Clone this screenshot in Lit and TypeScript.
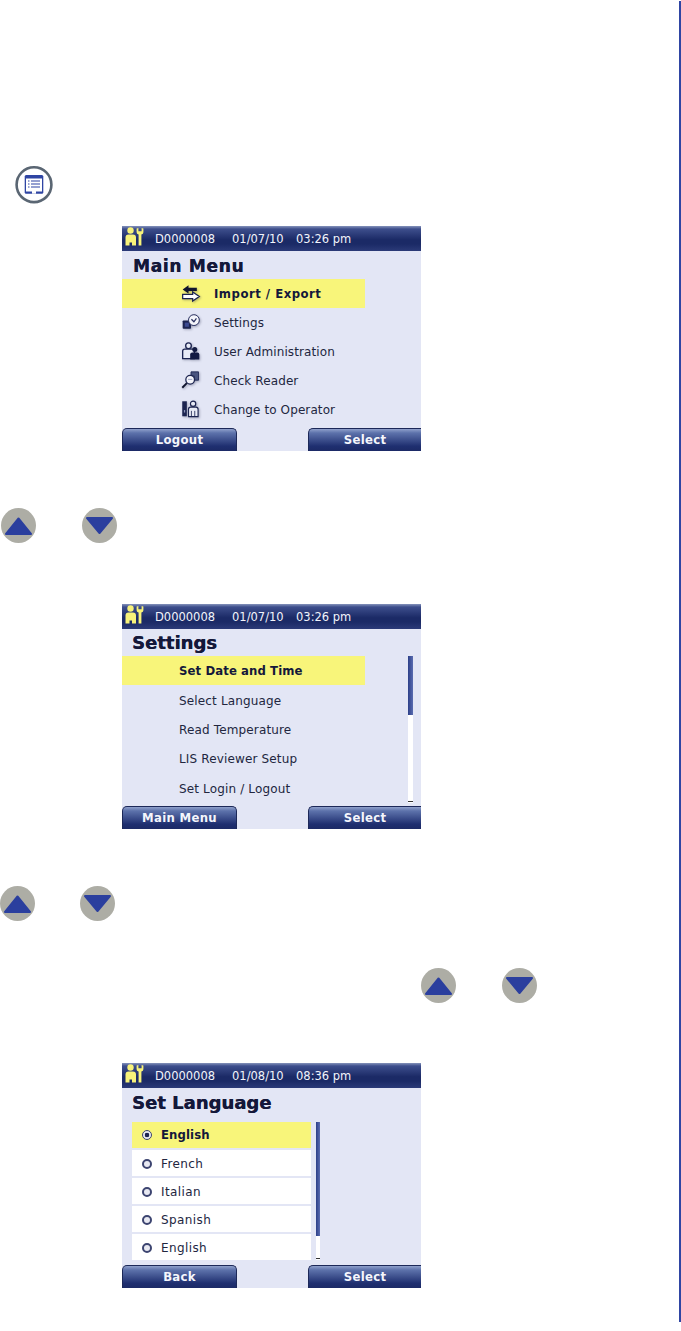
import { LitElement, html, css, svg } from "lit";
import { customElement } from "lit/decorators.js";

const workerIcon = html`<svg class="worker" width="20" height="20" viewBox="0 0 20 20">
  <circle cx="6.5" cy="3.5" r="3.2" fill="#f7f27a"/>
  <path d="M1.5 18.5V10.5Q1.5 7.5 4.5 7.5H9Q12 7.5 12 10.5V18.5H8V15.5H5.5V18.5Z" fill="#f7f27a"/>
  <path d="M12.6 1.5V5.2Q12.6 7 14.6 7.6V18.5H17.4V7.6Q19.4 7 19.4 5.2V1.5L17.6 1V4.3H14.4V1Z" fill="#f7f27a"/>
</svg>`;

const icons: Record<string, unknown> = {
  transfer: html`<svg viewBox="0 0 24 22">
    <path d="M2 6.5 9 1.5V4.5H19V8.5H9V11.5Z" fill="#10142e"/>
    <path d="M2 12.5H14V9.5L22 15 14 20.5V17.5H2Z" fill="#fff" stroke="#1a2350" stroke-width="1.5"/>
  </svg>`,
  settings: html`<svg viewBox="0 0 24 22">
    <rect x="2" y="9" width="10" height="10" rx="1" fill="#1c2450"/>
    <rect x="4.5" y="11.5" width="5" height="5" fill="#3c4a90"/>
    <circle cx="15.5" cy="8.5" r="6.5" fill="#f4f5fb" stroke="#2a3160" stroke-width="1.2"/>
    <path d="M12.5 7.5 15.5 10.5 18.5 6.5" fill="none" stroke="#2a3160" stroke-width="1.5"/>
  </svg>`,
  users: html`<svg viewBox="0 0 24 22">
    <circle cx="9" cy="4.5" r="3.4" fill="#e8ebf6" stroke="#1c2450" stroke-width="1.6"/>
    <path d="M2 20V11Q2 8.5 4.5 8.5H13.5Q16 8.5 16 11V20Z" fill="#e8ebf6" stroke="#1c2450" stroke-width="1.6"/>
    <circle cx="16.5" cy="9" r="3" fill="#121a42"/>
    <path d="M11 21V15Q11 12.5 13.5 12.5H19.5Q22 12.5 22 15V21Z" fill="#121a42"/>
  </svg>`,
  reader: html`<svg viewBox="0 0 24 22">
    <path d="M12 1H21V11H16V6H12Z" fill="#4a5580" stroke="#1c2450"/>
    <circle cx="11" cy="10.5" r="5.2" fill="#f4f5fb" stroke="#1c2450" stroke-width="1.5"/>
    <path d="M7 14.5 1.5 20" stroke="#10142e" stroke-width="2.4"/>
    <path d="M8.5 10H13.5" stroke="#8c93b8"/>
  </svg>`,
  operator: html`<svg viewBox="0 0 24 22">
    <rect x="1.5" y="1.5" width="5.5" height="18" fill="#1c2450"/>
    <rect x="3.5" y="12" width="1.5" height="3" fill="#8c93b8"/>
    <circle cx="14.5" cy="4.5" r="3.2" fill="#e8ebf6" stroke="#1c2450" stroke-width="1.4"/>
    <path d="M9 20V11Q9 8.5 11.5 8.5H18Q20.5 8.5 20.5 11V20Z" fill="#e8ebf6" stroke="#1c2450" stroke-width="1.4"/>
    <path d="M12.5 13V20M16.5 13V20" stroke="#1c2450"/>
  </svg>`,
};

const infoIcon = html`<svg class="info" width="38" height="38" viewBox="0 0 38 38">
  <circle cx="19" cy="18.7" r="17.4" fill="#fff" stroke="#5a6673" stroke-width="2.6"/>
  <rect x="9.7" y="9" width="18.6" height="18.7" rx="1.5" fill="#2f45a3"/>
  <rect x="11" y="12.5" width="16" height="13" fill="#fff"/>
  <rect x="17" y="25" width="4" height="2.7" fill="#fff"/>
  <path d="M13 15H14.5M16 15H25M13 18H14.5M16 18H25M13 21H14.5M16 21H25" stroke="#2f45a3" stroke-width="1.2"/>
</svg>`;

const arrow = (dir: "up" | "down") => html`<svg class="arrow" width="35" height="35" viewBox="0 0 35 35">
  <circle cx="17.5" cy="17.5" r="17.5" fill="#adada5"/>
  ${dir === "up"
    ? svg`<path d="M17.5 10.5 30 26H5Z" fill="#2b3f9e" stroke="#2b3f9e" stroke-width="2" stroke-linejoin="round"/>`
    : svg`<path d="M5 10H30L17.5 25Z" fill="#2b3f9e" stroke="#2b3f9e" stroke-width="2" stroke-linejoin="round"/>`}
</svg>`;

const arrows = (cls: string) => html`<div class="arrows ${cls}">${arrow("up")}${arrow("down")}</div>`;

const header = (date: string, time: string) => html`<div class="head">
  ${workerIcon}<span class="id">D0000008</span><span class="date">${date}</span><span class="time">${time}</span>
</div>`;

const foot = (left: string) => html`<div class="foot">
  <div class="btn">${left}</div><div class="btn right">Select</div>
</div>`;

const menu = [
  ["transfer", "Import / Export"],
  ["settings", "Settings"],
  ["users", "User Administration"],
  ["reader", "Check Reader"],
  ["operator", "Change to Operator"],
];
const settings = ["Set Date and Time", "Select Language", "Read Temperature", "LIS Reviewer Setup", "Set Login / Logout"];
const langs = ["English", "French", "Italian", "Spanish", "English"];

@customElement("app-root")
export class AppRoot extends LitElement {
  static styles = css`
    :host { display: block; width: 681px; height: 1331px; background: #fff; font-family: "DejaVu Sans", Verdana, sans-serif; overflow: hidden; }
    .page { display: flex; height: 1322px; }
    .main { flex: 1; padding-top: 166px; }
    .rule { width: 2px; background: #2f45a3; margin-top: 1px; }
    .info { display: block; margin-left: 15px; }
    .screen { width: 299px; height: 225px; margin-left: 122px; background: #e3e6f5; display: flex; flex-direction: column; color: #14183a; }
    .s1 { margin-top: 22px; }
    .s2 { margin-top: 61px; }
    .s3 { margin-top: 60px; }
    .head { height: 25px; flex: none; display: flex; align-items: center; color: #f2f4fb; font-size: 11.5px;
      background: linear-gradient(#8593bb 0, #3d4e8c 12%, #1b2a66 55%, #1b2a66 72%, #2b3a78 100%); }
    .worker { margin: 0 0 3px 2px; flex: none; }
    .id { margin-left: 11px; width: 77px; }
    .date { width: 64px; }
    .time { white-space: nowrap; }
    .title { height: 28px; flex: none; padding-left: 11px; font-size: 17px; font-weight: 700; letter-spacing: .7px; line-height: 30px; color: #14183a; text-shadow: .3px 0 0 #14183a; }
    .s2 .title { padding-left: 10px; letter-spacing: 0; line-height: 28px; height: 27px; font-size: 18px; }
    .s3 .title { padding-left: 10px; height: 34px; line-height: 30px; font-size: 18px; letter-spacing: 0; }
    .rows { flex: 1; min-height: 0; }
    .row { width: 243px; height: 29px; display: flex; align-items: center; font-size: 12px; color: #22263f; white-space: nowrap; box-sizing: border-box; padding-left: 57px; }
    .row.sel { background: #f8f57a; font-weight: 700; color: #14183a; font-size: 11.7px; }
    .menu .row { letter-spacing: .1px; }
    .menu .row.sel { letter-spacing: .5px; }
    .menu svg { width: 20px; height: 18.4px; margin: 0 13px 0 2px; flex: none; filter: blur(.3px) drop-shadow(1px 1px 1px rgba(20, 24, 58, .3)); }
    .plain { display: flex; flex-direction: column; }
    .plain .row { height: 29.25px; letter-spacing: .15px; padding-top: 2px; }
    .plain .row.sel { letter-spacing: .1px; padding-top: 0; }
    .s2 .rows { display: flex; }
    .scroll { background: #fff; position: relative; flex: none; }
    .scroll .thumb { background: linear-gradient(90deg, #2c3f88, #5a6cb0); }
    .scroll .tick { position: absolute; left: 0; right: 0; bottom: 1px; height: 1px; background: #333; }
    .s2 .scroll { width: 5px; margin-left: 43px; height: 147px; }
    .s2 .thumb { height: 59px; }
    .langs { display: flex; padding-left: 10px; }
    .langlist { width: 179px; display: flex; flex-direction: column; gap: 2px; }
    .lang { height: 26px; box-sizing: border-box; padding-top: 2px; background: #fff; display: flex; align-items: center; font-size: 12px; letter-spacing: .4px; color: #22263f; }
    .lang.sel { padding-top: 0; background: #f8f57a; font-weight: 700; font-size: 11.7px; color: #14183a; letter-spacing: .1px; }
    .radio { width: 10px; height: 10px; box-sizing: border-box; margin: 0 9px 0 10px; border: 2px solid #3c4470; border-radius: 50%; background: #e8e9f2; flex: none; }
    .lang.sel .radio { border-width: 1.5px; background: radial-gradient(circle, #1c2450 0 2px, #e8e9f2 2.6px); }
    .s3 .scroll { width: 4px; margin-left: 5px; height: 138px; }
    .s3 .thumb { height: 114px; }
    .foot { height: 23px; flex: none; display: flex; justify-content: space-between; }
    .btn { width: 115px; box-sizing: border-box; border-radius: 5px 5px 0 0; border: 1px solid #1c2858; border-bottom: 0;
      background: linear-gradient(#8fa0cb 0, #5d72ab 18%, #1f2f70 78%, #1c2a66 100%); color: #f4f6fc; font-weight: 700; font-size: 11.7px;
      letter-spacing: .3px; text-align: center; line-height: 23px; }
    .btn.right { width: 113px; border-right: 0; border-radius: 5px 0 0 0; }
    .arrows { display: flex; }
    .arrows .arrow { display: block; flex: none; }
    .a1 { margin-top: 57px; margin-left: 1px; gap: 46px; }
    .a2 { margin-top: 57px; gap: 45px; }
    .a3 { margin-top: 47px; margin-left: 421px; gap: 46px; }
  `;

  render() {
    return html`<div class="page">
      <div class="main">
        ${infoIcon}
        <section class="screen s1">
          ${header("01/07/10", "03:26 pm")}
          <div class="title">Main Menu</div>
          <div class="rows menu">
            ${menu.map(([ic, label], i) => html`<div class="row ${i === 0 ? "sel" : ""}">${icons[ic]}${label}</div>`)}
          </div>
          ${foot("Logout")}
        </section>
        ${arrows("a1")}
        <section class="screen s2">
          ${header("01/07/10", "03:26 pm")}
          <div class="title">Settings</div>
          <div class="rows">
            <div class="plain">
              ${settings.map((l, i) => html`<div class="row ${i === 0 ? "sel" : ""}">${l}</div>`)}
            </div>
            <div class="scroll"><div class="thumb"></div><div class="tick"></div></div>
          </div>
          ${foot("Main Menu")}
        </section>
        ${arrows("a2")}
        ${arrows("a3")}
        <section class="screen s3">
          ${header("01/08/10", "08:36 pm")}
          <div class="title">Set Language</div>
          <div class="rows langs">
            <div class="langlist">
              ${langs.map((l, i) => html`<div class="lang ${i === 0 ? "sel" : ""}"><span class="radio"></span>${l}</div>`)}
            </div>
            <div class="scroll"><div class="thumb"></div><div class="tick"></div></div>
          </div>
          ${foot("Back")}
        </section>
      </div>
      <div class="rule"></div>
    </div>`;
  }
}
